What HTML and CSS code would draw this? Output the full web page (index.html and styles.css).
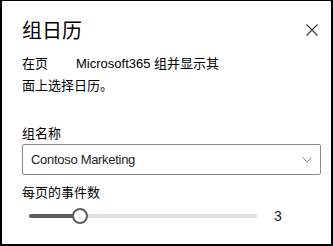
FILE: index.html
```html
<!DOCTYPE html>
<html lang="zh-CN">
<head>
<meta charset="utf-8">
<link rel="stylesheet" href="styles.css">
</head>
<body>
<div class="panel">
  <div class="header">
    <h1 class="title">组日历</h1>
    <button class="close" aria-label="关闭">
      <svg width="12" height="12" viewBox="0 0 12 12"><path d="M0.5 0.5 L11.5 11.5 M11.5 0.5 L0.5 11.5" stroke="#3b3a39" stroke-width="1.1" fill="none"/></svg>
    </button>
  </div>
  <p class="desc">在页<span class="gap"></span>Microsoft365 组并显示其<br>面上选择日历。</p>
  <div class="field">
    <label class="label">组名称</label>
    <div class="select">
      <span class="select-text">Contoso Marketing</span>
      <svg class="chev" width="10" height="6" viewBox="0 0 10 6"><path d="M0.5 0.5 L5 5 L9.5 0.5" stroke="#8a8886" stroke-width="1" fill="none"/></svg>
    </div>
  </div>
  <div class="field2">
    <div class="label">每页的事件数</div>
    <div class="slider-row">
      <div class="track">
        <div class="fill" style="width:51px"></div>
        <div class="thumb" style="left:51px"></div>
      </div>
      <span class="value">3</span>
    </div>
  </div>
</div>
</body>
</html>
```
FILE: styles.css
```css
html, body { margin: 0; padding: 0; background: #fff; }
.panel {
  width: 333px;
  height: 246px;
  box-sizing: border-box;
  border: 2px solid #000;
  border-top-width: 1px;
  border-bottom-width: 2px;
  padding: 14px 10px 0 20px;
  font-family: "Liberation Sans", "Noto Sans CJK SC", sans-serif;
  color: #000;
  background: #fff;
}
.header {
  display: flex;
  justify-content: space-between;
  align-items: center;
  padding-right: 3px;
  font-family: "Noto Sans CJK SC", sans-serif;
}
.title {
  margin: 0;
  font-size: 20px;
  font-weight: 400;
  line-height: 30px;
}
.close {
  border: 0;
  background: none;
  padding: 0;
  width: 12px;
  height: 12px;
  display: flex;
}
.desc {
  margin: 8px 0 0 0;
  font-size: 13px;
  line-height: 22px;
}
.desc .gap { display: inline-block; width: 28px; }
.field { margin-top: 27px; }
.label {
  display: block;
  font-family: "Noto Sans CJK SC", sans-serif;
  font-size: 13px;
  line-height: 18px;
}
.select {
  margin-top: 2px;
  height: 31px;
  box-sizing: border-box;
  border: 1px solid #8a8886;
  border-radius: 2px;
  display: flex;
  align-items: center;
  justify-content: space-between;
  padding: 0 8px 0 8px;
}
.select-text {
  font-size: 13px;
  letter-spacing: -0.3px;
  color: #201f1e;
}
.field2 { margin-top: 8px; }
.slider-row {
  display: flex;
  align-items: center;
  margin-top: 7px;
  padding-left: 7px;
}
.track {
  position: relative;
  width: 228px;
  height: 4px;
  border-radius: 2px;
  background: #e1dfdd;
}
.fill {
  height: 4px;
  border-radius: 2px;
  background: #605e5c;
}
.thumb {
  position: absolute;
  top: 50%;
  width: 16px;
  height: 16px;
  box-sizing: border-box;
  margin: -8px 0 0 -8px;
  border: 2px solid #605e5c;
  border-radius: 50%;
  background: #fff;
}
.value {
  margin-left: 17px;
  font-size: 14px;
  color: #201f1e;
}
```
